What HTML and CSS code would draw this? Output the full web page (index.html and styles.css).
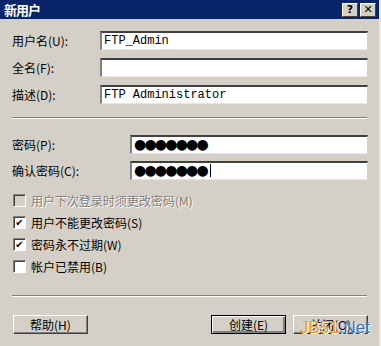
FILE: index.html
```html
<!DOCTYPE html>
<html lang="zh-CN">
<head>
  <meta charset="UTF-8">
  <title>新用户</title>
  <link rel="stylesheet" href="styles.css">
</head>
<body>
  <div class="window">
    <div class="titlebar">
      <span class="title">新用户</span>
      <div class="title-buttons">
        <span class="tbtn">?</span>
        <span class="tbtn close">✕</span>
      </div>
    </div>

    <div class="content">
      <div class="form">
        <label>用户名(U):</label>
        <div class="field">FTP_Admin</div>
        <label>全名(F):</label>
        <div class="field"></div>
        <label>描述(D):</label>
        <div class="field">FTP Administrator</div>
      </div>

      <div class="sep"></div>

      <div class="form pw">
        <label>密码(P):</label>
        <div class="field dots">●●●●●●●</div>
        <label>确认密码(C):</label>
        <div class="field dots">●●●●●●●<span class="caret"></span></div>
      </div>

      <div class="checks">
        <div class="check disabled"><span class="box"></span>用户下次登录时须更改密码(M)</div>
        <div class="check"><span class="box on">✔</span>用户不能更改密码(S)</div>
        <div class="check"><span class="box on">✔</span>密码永不过期(W)</div>
        <div class="check"><span class="box"></span>帐户已禁用(B)</div>
      </div>

      <div class="sep low"></div>

      <div class="buttons">
        <button class="btn">帮助(H)</button>
        <div class="right">
          <button class="btn default">创建(E)</button>
          <button class="btn">关闭(O)</button>
        </div>
      </div>
    </div>
    <div class="watermark"><span class="jb">JB51</span>.Net</div>
  </div>
</body>
</html>
```

FILE: styles.css
```css
body {
  margin: 0;
  font-family: "Noto Sans CJK SC", sans-serif;
  font-size: 12px;
  background: #d4d0c8;
}
.window {
  position: relative;
  width: 381px;
  height: 346px;
  background: #d4d0c8;
  box-sizing: border-box;
  border-right: 2px solid #e8e6e0;
}
.titlebar {
  height: 19px;
  background: #0a246a;
  display: flex;
  align-items: center;
  justify-content: space-between;
  padding: 0 3px 0 4px;
}
.title {
  color: #fff;
  font-weight: bold;
  font-size: 13px;
  letter-spacing: -1px;
}
.title-buttons {
  display: flex;
  gap: 2px;
}
.tbtn {
  width: 14px;
  height: 12px;
  background: #d4d0c8;
  border: 1px solid;
  border-color: #fff #404040 #404040 #fff;
  font-family: "DejaVu Sans", sans-serif;
  font-weight: bold;
  font-size: 11px;
  line-height: 12px;
  text-align: center;
  color: #000;
}
.content {
  padding: 12px 11px 0 12px;
}
.form {
  display: grid;
  grid-template-columns: 88px 268px;
  row-gap: 8px;
  align-items: center;
}
.form.pw {
  grid-template-columns: 118px 238px;
  row-gap: 7px;
  margin-top: 16px;
}
label {
  color: #000;
}
.field {
  height: 19px;
  box-sizing: border-box;
  background: #fff;
  border-top: 2px solid #404040;
  border-left: 2px solid #808080;
  border-right: 1px solid #d4d0c8;
  border-bottom: 1px solid #e8e6e0;
  font-family: "Liberation Mono", monospace;
  font-size: 12px;
  line-height: 16px;
  padding-left: 2px;
  white-space: nowrap;
  overflow: hidden;
}
.field.dots {
  font-family: "DejaVu Sans", sans-serif;
  font-size: 14px;
  letter-spacing: -1.8px;
  line-height: 15px;
}
.caret {
  display: inline-block;
  width: 1px;
  height: 13px;
  background: #000;
  margin-left: 3px;
  vertical-align: -2px;
}
.sep {
  margin-top: 13px;
  height: 1px;
  background: #808080;
  border-bottom: 1px solid #fff;
  margin-right: 1px;
}
.checks {
  margin-top: 13px;
  display: flex;
  flex-direction: column;
  gap: 8px;
  padding-left: 1px;
}
.check {
  display: flex;
  align-items: center;
  gap: 5px;
  height: 14px;
  color: #000;
}
.check.disabled {
  color: #808080;
  text-shadow: 1px 1px 0 #fff;
}
.box {
  width: 11px;
  height: 11px;
  background: #fff;
  border-top: 1px solid #808080;
  border-left: 1px solid #808080;
  border-right: 1px solid #fff;
  border-bottom: 1px solid #fff;
  box-shadow: inset 1px 1px 0 #404040;
  font-size: 10px;
  line-height: 11px;
  text-align: center;
  font-family: "DejaVu Sans", sans-serif;
  text-shadow: none;
}
.disabled .box {
  background: #d4d0c8;
}
.sep.low {
  margin-top: 22px;
}
.buttons {
  margin-top: 18px;
  display: flex;
  justify-content: space-between;
  padding-left: 1px;
}
.right {
  display: flex;
  gap: 7px;
}
.btn {
  width: 75px;
  height: 19px;
  padding: 0;
  margin: 0;
  background: #d4d0c8;
  border: 1px solid;
  border-color: #fff #404040 #404040 #fff;
  box-shadow: inset -1px -1px 0 #808080;
  font-family: "Noto Sans CJK SC", sans-serif;
  font-size: 12px;
  color: #000;
}
.btn.default {
  border: 1px solid #000;
  box-shadow: inset 1px 1px 0 #fff, inset -2px -2px 0 #808080;
}
.watermark {
  position: absolute;
  left: 300px;
  top: 318px;
  font-family: "Liberation Sans", sans-serif;
  font-size: 17px;
  color: #3b6fb6;
  text-shadow: 1px 1px 0 #fff;
}
.jb {
  color: #f0a030;
}
```
